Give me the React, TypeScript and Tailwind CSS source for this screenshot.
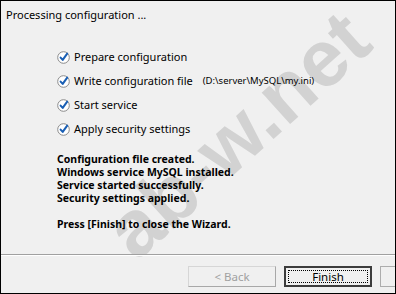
import React from "react";

function CheckIcon() {
  return (
    <svg width="13" height="13" viewBox="0 0 13 13" className="shrink-0">
      <circle cx="6.5" cy="6.5" r="5.8" fill="#ffffff" stroke="#8a8a8a" strokeWidth="1" />
      <path d="M3.6 6.6 L5.7 8.9 L10.2 2.6" fill="none" stroke="#1a5fb4" strokeWidth="2" strokeLinecap="round" strokeLinejoin="round" />
    </svg>
  );
}

const items = [
  { label: "Prepare configuration" },
  { label: "Write configuration file", extra: "(D:\\server\\MySQL\\my.ini)" },
  { label: "Start service" },
  { label: "Apply security settings" },
];

export default function App() {
  return (
    <div
      className="relative w-[396px] h-[294px] overflow-hidden bg-[#f0f0f0] border border-black text-[#000]"
      style={{ fontFamily: '"Noto Sans", "Open Sans", sans-serif' }}
    >
      <div
        className="pointer-events-none absolute left-[76px] top-[94px] whitespace-nowrap -rotate-[42deg] text-[80px] font-bold text-[#d2d2d2] leading-none"
        style={{ fontFamily: '"Liberation Sans", Arial, sans-serif' }}
      >
        ab-w.net
      </div>
      <div className="relative flex flex-col h-full">
        <div className="pl-[5px] pt-[6px] text-[11px] leading-[16px]">Processing configuration ...</div>
        <div className="flex flex-col gap-[8px] pl-[56px] pt-[26px]">
          {items.map((it) => (
            <div key={it.label} className="flex items-center h-[16px] text-[11px]">
              <CheckIcon />
              <span className="ml-[4px]">{it.label}</span>
              {it.extra && <span className="ml-[10px] text-[9.5px]">{it.extra}</span>}
            </div>
          ))}
        </div>
        <div className="pl-[56px] pt-[16px] text-[10.5px] font-bold leading-[13px]">
          <div>Configuration file created.</div>
          <div>Windows service MySQL installed.</div>
          <div>Service started successfully.</div>
          <div>Security settings applied.</div>
          <div className="mt-[13px]">Press [Finish] to close the Wizard.</div>
        </div>
        <div className="flex-1" />
        <div className="h-[2px] border-t border-[#a0a0a0] border-b border-b-white" />
        <div className="flex gap-[8px] pl-[187px] pt-[10px] pb-[6px]">
          <div className="shrink-0 w-[88px] h-[21px] border border-[#d6d6d6] border-r-[#a8a8a8] border-b-[#a8a8a8] bg-[#f0f0f0] flex items-center justify-center text-[11.5px] text-[#a0a0a0]">
            &lt; Back
          </div>
          <div className="shrink-0 w-[88px] h-[21px] border-2 border-[#3c3c3c] bg-[#f0f0f0] p-[2px]">
            <div className="w-full h-full border border-dotted border-black flex items-center justify-center text-[11.5px] leading-none">
              Finish
            </div>
          </div>
          <div className="shrink-0 w-[88px] h-[21px] border border-[#adadad] bg-[#f0f0f0]" />
        </div>
      </div>
    </div>
  );
}
